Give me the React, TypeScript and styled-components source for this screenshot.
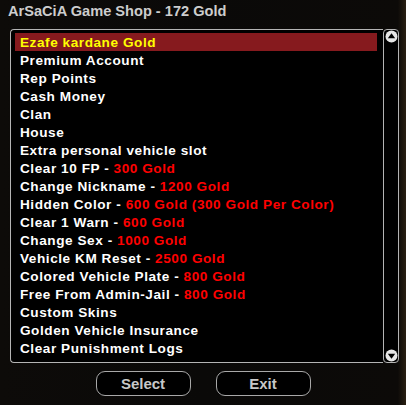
import React from "react";
import styled, { createGlobalStyle } from "styled-components";

const GlobalStyle = createGlobalStyle`
  html, body {
    margin: 0;
    padding: 0;
    background: #0b0907;
  }
`;

type Item = { label: string; price?: string };

const items: Item[] = [
  { label: "Ezafe kardane Gold" },
  { label: "Premium Account" },
  { label: "Rep Points" },
  { label: "Cash Money" },
  { label: "Clan" },
  { label: "House" },
  { label: "Extra personal vehicle slot" },
  { label: "Clear 10 FP", price: "300 Gold" },
  { label: "Change Nickname", price: "1200 Gold" },
  { label: "Hidden Color", price: "600 Gold (300 Gold Per Color)" },
  { label: "Clear 1 Warn", price: "600 Gold" },
  { label: "Change Sex", price: "1000 Gold" },
  { label: "Vehicle KM Reset", price: "2500 Gold" },
  { label: "Colored Vehicle Plate", price: "800 Gold" },
  { label: "Free From Admin-Jail", price: "800 Gold" },
  { label: "Custom Skins" },
  { label: "Golden Vehicle Insurance" },
  { label: "Clear Punishment Logs" },
];

export default function App() {
  const selected = 0;
  return (
    <>
      <GlobalStyle />
      <Dialog>
        <Title>ArSaCiA Game Shop - 172 Gold</Title>
        <ListArea>
          <ListBox>
            {items.map((item, i) => (
              <Row key={item.label} active={i === selected}>
                {item.label}
                {item.price && (
                  <>
                    {" - "}
                    <Price>{item.price}</Price>
                  </>
                )}
              </Row>
            ))}
          </ListBox>
          <ScrollBar>
            <ArrowButton>
              <svg width="13" height="13" viewBox="0 0 13 13">
                <circle cx="6.5" cy="6.5" r="6" fill="#e6e6e6" />
                <path d="M2.8 8.2 L6.5 3.2 L10.2 8.2 Z" fill="#000" />
              </svg>
            </ArrowButton>
            <ArrowButton>
              <svg width="13" height="13" viewBox="0 0 13 13">
                <circle cx="6.5" cy="6.5" r="6" fill="#e6e6e6" />
                <path d="M2.8 4.8 L6.5 9.8 L10.2 4.8 Z" fill="#000" />
              </svg>
            </ArrowButton>
          </ScrollBar>
        </ListArea>
        <Buttons>
          <Button>Select</Button>
          <Button>Exit</Button>
        </Buttons>
      </Dialog>
    </>
  );
}

const Dialog = styled.div`
  width: 406px;
  height: 405px;
  box-sizing: border-box;
  background: linear-gradient(90deg, #0d0b09 0%, #0a0908 50%, #0c0a08 98%, #2a2013 100%);
  font-family: "Liberation Sans", Arial, sans-serif;
  font-weight: bold;
  display: flex;
  flex-direction: column;
  overflow: hidden;
`;

const Title = styled.div`
  height: 29px;
  box-sizing: border-box;
  padding: 2px 0 0 8px;
  font-size: 14.6px;
  line-height: 18px;
  color: #cdcdcd;
`;

const ListArea = styled.div`
  display: flex;
  margin-left: 10px;
  height: 334px;
`;

const ListBox = styled.div`
  width: 373px;
  box-sizing: border-box;
  border: 1px solid #b4b4b4;
  border-right: none;
  border-radius: 4px 0 0 4px;
  background: #000;
  padding: 3px 6px 0 4px;
`;

const Row = styled.div<{ active: boolean }>`
  height: 18px;
  line-height: 19px;
  padding-left: 5px;
  font-size: 13.6px;
  color: ${(p) => (p.active ? "#ffff00" : "#ffffff")};
  background: ${(p) => (p.active ? "#861a1e" : "transparent")};
  white-space: nowrap;
  letter-spacing: 0.55px;
`;

const Price = styled.span`
  color: #ff0000;
`;

const ScrollBar = styled.div`
  width: 16px;
  box-sizing: border-box;
  border: 1px solid #b4b4b4;
  border-radius: 4px;
  background: #000;
  display: flex;
  flex-direction: column;
  justify-content: space-between;
  align-items: center;
  padding: 0;
`;

const ArrowButton = styled.div`
  width: 13px;
  height: 13px;
  display: flex;
`;

const Buttons = styled.div`
  display: flex;
  justify-content: center;
  gap: 25px;
  margin-top: 8px;
`;

const Button = styled.div`
  width: 95px;
  height: 25px;
  box-sizing: border-box;
  border: 1.5px solid #a8a8a8;
  border-radius: 9px;
  background: #000;
  color: #c8c8c8;
  font-size: 15px;
  display: flex;
  align-items: center;
  justify-content: center;
`;
